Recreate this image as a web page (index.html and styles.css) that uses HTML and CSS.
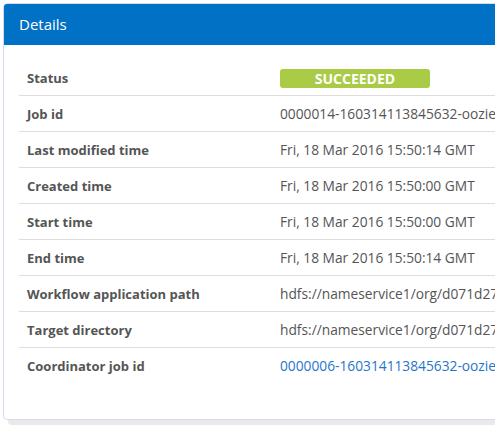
FILE: index.html
```html
<!DOCTYPE html>
<html>
<head>
<meta charset="utf-8">
<link rel="stylesheet" href="styles.css">
</head>
<body>
<div class="card">
  <div class="card-header">Details</div>
  <div class="card-body">
    <table class="details">
      <tr><th>Status</th><td><span class="badge">SUCCEEDED</span></td></tr>
      <tr><th>Job id</th><td>0000014-160314113845632-oozie-oozi-W</td></tr>
      <tr><th>Last modified time</th><td>Fri, 18 Mar 2016 15:50:14 GMT</td></tr>
      <tr><th>Created time</th><td>Fri, 18 Mar 2016 15:50:00 GMT</td></tr>
      <tr><th>Start time</th><td>Fri, 18 Mar 2016 15:50:00 GMT</td></tr>
      <tr><th>End time</th><td>Fri, 18 Mar 2016 15:50:14 GMT</td></tr>
      <tr><th>Workflow application path</th><td>hdfs://nameservice1/org/d071d27e/workflow</td></tr>
      <tr><th>Target directory</th><td>hdfs://nameservice1/org/d071d27e/target</td></tr>
      <tr><th>Coordinator job id</th><td><a class="link" href="#">0000006-160314113845632-oozie-oozi-C</a></td></tr>
    </table>
  </div>
</div>
</body>
</html>
```

FILE: styles.css
```css
html, body {
  margin: 0;
  padding: 0;
  overflow: hidden;
  background: #ffffff;
}
body {
  padding: 3px 0 0 3px;
  font-family: "Open Sans", "Noto Sans", sans-serif;
  color: #555555;
  width: 495px;
  height: 432px;
  box-sizing: border-box;
}
.card {
  width: 640px;
  height: 417px;
  box-sizing: border-box;
  border: 1px solid #d5dcec;
  border-radius: 4px;
  background: #fff;
  box-shadow: 5px 5px 0 #e9e9e9;
  overflow: hidden;
}
.card-header {
  background: #0071c5;
  color: #ffffff;
  height: 41px;
  line-height: 41px;
  padding-left: 15px;
  font-size: 15px;
  font-weight: 500;
}
.card-body {
  padding: 15px 0 0 15px;
}
.details {
  border-collapse: collapse;
  width: 620px;
  font-size: 13px;
}
.details tr + tr {
  border-top: 1px solid #dddddd;
}
.details th {
  text-align: left;
  font-weight: 700;
  color: #555;
  width: 245px;
  padding: 0 0 0 8px;
  height: 35px;
  white-space: nowrap;
}
.details td {
  padding: 0 0 0 8px;
  white-space: nowrap;
  font-size: 13.75px;
}
.badge {
  display: inline-block;
  width: 150px;
  height: 19px;
  line-height: 19px;
  background: #a9cb45;
  color: #fff;
  font-weight: 700;
  text-align: center;
  border-radius: 3px;
  font-size: 14px;
  vertical-align: middle;
}
.link {
  color: #1f76c9;
  text-decoration: none;
}
```
